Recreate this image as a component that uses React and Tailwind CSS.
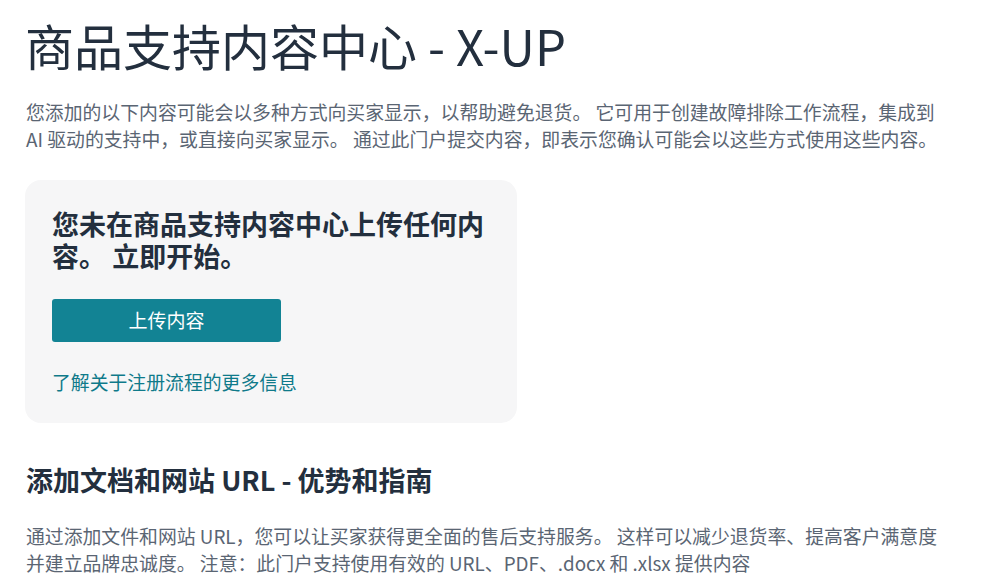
import React from 'react';

const App = () => {
  return (
    <div className="min-h-screen bg-white font-['Noto_Sans_CJK_SC','Noto_Sans',sans-serif] text-[#232f3e]">
      <div className="pl-[26px] pt-[16px] pb-8 max-w-[946px]">
        <h1 className="-ml-px text-[49px] leading-[58px] font-normal">商品支持内容中心 - X-UP</h1>

        <p className="mt-[24px] text-[18.85px] leading-[27px] text-[#5a6573]">
          您添加的以下内容可能会以多种方式向买家显示，以帮助避免退货。 它可用于创建故障排除工作流程，集成到 AI 驱动的支持中，或直接向买家显示。 通过此门户提交内容，即表示您确认可能会以这些方式使用这些内容。
        </p>

        <div className="mt-[28px] w-[492px] rounded-[16px] bg-[#f6f6f7] px-[27px] pt-[28px] pb-[28px] -ml-px">
          <h2 className="text-[27px] leading-[32px] font-bold text-[#232f3e]">
            您未在商品支持内容中心上传任何内容。 立即开始。
          </h2>
          <button className="mt-[27px] flex h-[43px] w-[229px] items-center justify-center rounded-[3px] bg-[#128394] text-[19px] text-white">
            上传内容
          </button>
          <a href="#" className="mt-[26px] block text-[18.85px] leading-[27px] text-[#0f7a8a]">
            了解关于注册流程的更多信息
          </a>
        </div>

        <h2 className="mt-[40px] text-[27px] leading-[33px] font-bold text-[#232f3e]">
          添加文档和网站 URL - 优势和指南
        </h2>
        <p className="mt-[26px] text-[18.85px] leading-[27px] text-[#5a6573]">
          通过添加文件和网站 URL，您可以让买家获得更全面的售后支持服务。 这样可以减少退货率、提高客户满意度并建立品牌忠诚度。 注意：此门户支持使用有效的 URL、PDF、.docx 和 .xlsx 提供内容
        </p>
      </div>
    </div>
  );
};

export default App;
